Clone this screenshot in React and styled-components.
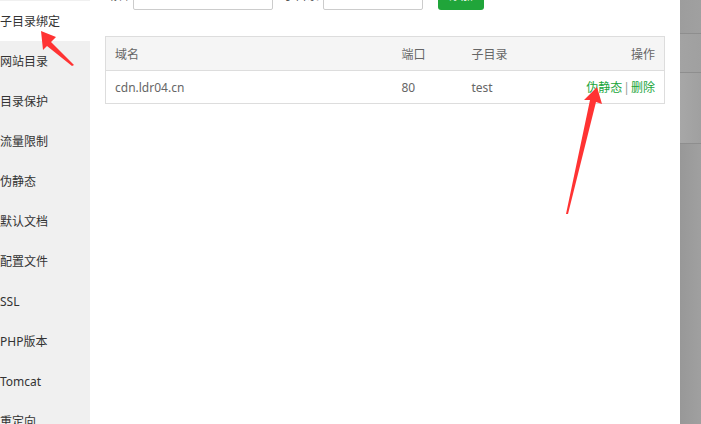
import React from 'react';
import styled, { createGlobalStyle } from 'styled-components';

const GlobalStyle = createGlobalStyle`
  html, body {
    margin: 0;
    padding: 0;
    background: #fff;
  }
  body {
    font-family: "Noto Sans", "Noto Sans CJK SC", sans-serif;
    font-size: 12px;
    color: #666;
  }
`;

const MENU = [
  '子目录绑定',
  '网站目录',
  '目录保护',
  '流量限制',
  '伪静态',
  '默认文档',
  '配置文件',
  'SSL',
  'PHP版本',
  'Tomcat',
  '重定向',
];

const ROWS = [{ domain: 'cdn.ldr04.cn', port: '80', path: 'test' }];

const App = () => (
  <>
    <GlobalStyle />
    <Page>
      <Sidebar>
        {MENU.map((item, i) => (
          <MenuItem key={item} active={i === 0}>
            {item}
          </MenuItem>
        ))}
      </Sidebar>
      <Main>
        <FormRow>
          <Label>域名</Label>
          <Input width={140} defaultValue="" />
          <Label>子目录</Label>
          <Input width={100} defaultValue="/test" />
          <AddButton>添加</AddButton>
        </FormRow>
        <Table>
          <colgroup>
            <col style={{ width: 287 }} />
            <col style={{ width: 70 }} />
            <col style={{ width: 100 }} />
            <col />
          </colgroup>
          <thead>
            <tr>
              <Th>域名</Th>
              <Th>端口</Th>
              <Th>子目录</Th>
              <Th align="right">操作</Th>
            </tr>
          </thead>
          <tbody>
            {ROWS.map((row) => (
              <tr key={row.domain}>
                <Td>{row.domain}</Td>
                <Td>{row.port}</Td>
                <Td>{row.path}</Td>
                <Td align="right">
                  <Link>伪静态</Link>
                  <Sep>|</Sep>
                  <Link>删除</Link>
                </Td>
              </tr>
            ))}
          </tbody>
        </Table>
      </Main>
      <Backdrop>
        <Shade tone="#9d9d9d" h={33} />
        <Shade tone="#a3a3a3" h={38} />
        <Shade tone="#a7a7a7" h={70} />
        <Shade tone="#989898" grow />
      </Backdrop>
      <Arrows width="701" height="424" viewBox="0 0 701 424">
        <polygon fill="#ff3333" points="41,31 56,37 51,42 74,65 72,66 47,46 43,50" />
        <polygon fill="#ff3333" points="597,87 602,104 596,102 568,214 566,214 590,100 584,100" />
      </Arrows>
    </Page>
  </>
);

const Page = styled.div`
  position: relative;
  display: flex;
  width: 701px;
  height: 424px;
  overflow: hidden;
`;

const Sidebar = styled.div`
  width: 90px;
  flex-shrink: 0;
  background: #f0f0f0;
  padding-top: 1px;
`;

const MenuItem = styled.div`
  height: 40px;
  line-height: 42px;
  font-size: 12px;
  color: #333;
  white-space: nowrap;
  background: ${(p) => (p.active ? '#fff' : 'transparent')};
`;

const Main = styled.div`
  flex: 1;
  background: #fff;
  padding-left: 15px;
`;

const FormRow = styled.div`
  display: flex;
  align-items: center;
  height: 30px;
  margin-top: -20px;
`;

const Label = styled.span`
  color: #555;
  margin-right: 4px;
  &:not(:first-child) {
    margin-left: 10px;
  }
`;

const Input = styled.input`
  box-sizing: border-box;
  width: ${(p) => p.width}px;
  height: 30px;
  border: 1px solid #ccc;
  border-radius: 2px;
  padding: 0 8px;
  font: inherit;
  color: #555;
`;

const AddButton = styled.button`
  margin-left: 15px;
  width: 46px;
  height: 30px;
  border: none;
  border-radius: 3px;
  background: #20a53a;
  color: #fff;
  font: inherit;
`;

const Table = styled.table`
  margin-top: 26px;
  width: 560px;
  border-collapse: collapse;
  table-layout: fixed;
  border: 1px solid #ddd;
`;

const Th = styled.th`
  height: 33px;
  padding: 0 9px;
  background: #f5f5f5;
  font-weight: normal;
  color: #666;
  text-align: ${(p) => p.align || 'left'};
  border-bottom: 1px solid #ddd;
`;

const Td = styled.td`
  height: 32px;
  padding: 0 9px;
  color: #666;
  text-align: ${(p) => p.align || 'left'};
`;

const Link = styled.a`
  color: #20a53a;
`;

const Sep = styled.span`
  color: #999;
  margin: 0 1px;
`;

const Backdrop = styled.div`
  width: 21px;
  flex-shrink: 0;
  display: flex;
  flex-direction: column;
`;

const Shade = styled.div`
  height: ${(p) => (p.h ? `${p.h}px` : 'auto')};
  flex: ${(p) => (p.grow ? 1 : 'none')};
  background: linear-gradient(to right, ${(p) => p.tone}, #a0a0a0);
  border-bottom: ${(p) => (p.grow ? 'none' : '1px solid #8e8e8e')};
`;

const Arrows = styled.svg`
  position: absolute;
  left: 0;
  top: 0;
  pointer-events: none;
`;

export default App;
